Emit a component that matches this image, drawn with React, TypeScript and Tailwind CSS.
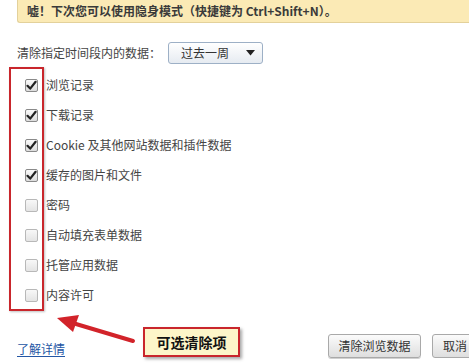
import React from 'react';

// The things a user can choose to clear.
const items: { label: string; checked: boolean }[] = [
  { label: "浏览记录", checked: true },
  { label: "下载记录", checked: true },
  { label: "Cookie 及其他网站数据和插件数据", checked: true },
  { label: "缓存的图片和文件", checked: true },
  { label: "密码", checked: false },
  { label: "自动填充表单数据", checked: false },
  { label: "托管应用数据", checked: false },
  { label: "内容许可", checked: false },
];

const Box = ({ checked }: { checked: boolean }) => {
  if (checked) {
    return (
      <span className="w-[13px] h-[13px] rounded-[2px] border border-[#8a8a8a] bg-gradient-to-b from-[#fafafa] to-[#dcdcdc] flex items-center justify-center shrink-0">
        <svg width="11" height="11" viewBox="0 0 11 11">
          <path d="M1.5 5.8 L4.2 8.6 L9.6 1.8" fill="none" stroke="#222" strokeWidth="2.2" strokeLinecap="round" strokeLinejoin="round" />
        </svg>
      </span>
    );
  }
  return (
    <span className="w-[13px] h-[13px] rounded-[2px] border border-[#b8b8b8] bg-gradient-to-b from-[#f8f8f8] to-[#e4e4e4] shrink-0" />
  );
};

const App = () => {
  return (
    <div className="relative w-[469px] h-[363px] overflow-hidden bg-white text-[#333] font-['Noto_Sans_CJK_SC',sans-serif] text-[12px]">
      {/* hint banner */}
      <div className="ml-[17px] h-[23px] pl-[9px] flex items-center bg-[#fbeab5] border-l border-b border-[#e3d19b] rounded-bl-[3px] text-[12px] font-bold text-[#3a3a3a] whitespace-nowrap">
        嘘！下次您可以使用隐身模式（快捷键为 Ctrl+Shift+N）。
      </div>

      {/* time range */}
      <div className="ml-[17px] mt-[19px] flex items-center h-[22px]">
        <span className="text-[#444]">清除指定时间段内的数据：</span>
        <div className="ml-[7px] w-[95px] h-[22px] border border-[#9db0c6] rounded-[3px] bg-gradient-to-b from-[#ffffff] to-[#e6ebf1] flex items-center justify-between pl-[12px] pr-[7px]">
          <span className="text-[#333]">过去一周</span>
          <svg width="9" height="6" viewBox="0 0 9 6">
            <path d="M0 0 H9 L4.5 5.5 Z" fill="#222" />
          </svg>
        </div>
      </div>

      {/* checkbox list */}
      <ul className="ml-[25px] mt-[6px] flex flex-col">
        {items.map((it, i) => (
          <li key={i} className="h-[30px] flex items-center gap-[8px] text-[#444]">
            <Box checked={it.checked} />
            <span className="whitespace-nowrap">{it.label}</span>
          </li>
        ))}
      </ul>

      {/* footer */}
      <div className="mt-[24px] ml-[17px] flex items-center">
        <a className="text-[#2456a4] underline underline-offset-2 mt-[6px]">了解详情</a>
        <div className="ml-auto flex gap-[11px] mr-[-40px]">
          <button className="w-[93px] h-[24px] rounded-[3px] border border-[#a9a9a9] bg-gradient-to-b from-[#fbfbfb] to-[#dedede] text-[#333] shadow-[0_1px_0_#d0d0d0]">
            清除浏览数据
          </button>
          <button className="w-[77px] h-[24px] rounded-[3px] border border-[#a9a9a9] bg-gradient-to-b from-[#fbfbfb] to-[#dedede] text-[#333] text-left pl-[10px]">
            取消
          </button>
        </div>
      </div>

      {/* annotation: red frame around checkboxes */}
      <div className="absolute left-[9px] top-[67px] w-[35px] h-[244px] border-2 border-[#c9262c] shadow-[1px_1px_2px_rgba(0,0,0,0.25)]" />

      {/* annotation: arrow */}
      <svg className="absolute left-0 top-0" width="469" height="363" viewBox="0 0 469 363">
        <line x1="133" y1="341" x2="76" y2="324" stroke="#d2232a" strokeWidth="4" strokeLinecap="round" />
        <polygon points="57,318 79,315 73,332" fill="#d2232a" />
      </svg>

      {/* annotation: label */}
      <div className="absolute left-[143px] top-[327px] w-[97px] h-[30px] border-2 border-[#c9262c] bg-[#fdf6c9] shadow-[2px_2px_3px_rgba(0,0,0,0.35)] flex items-center justify-center font-bold text-[14px] text-[#111]">
        可选清除项
      </div>
    </div>
  );
};

export default App;
